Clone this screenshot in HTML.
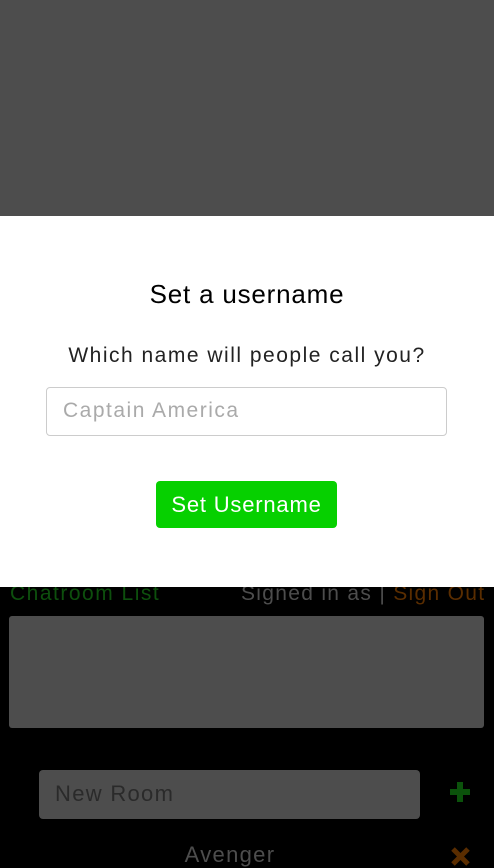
<!DOCTYPE html>
<html><head><meta charset="utf-8"><style>
*{margin:0;padding:0;box-sizing:border-box}
body{width:494px;height:864px;overflow:hidden;background:#000;font-family:"Liberation Sans",sans-serif;position:relative}
.top{position:absolute;left:0;top:0;width:494px;height:216px;background:#4d4d4d}
.modal{position:absolute;left:0;top:216px;width:494px;height:371px;background:#fff}
.abs{position:absolute;white-space:nowrap}
</style></head><body>
<div class="top"></div>
<div class="modal">
 <div class="abs" style="left:0;width:494px;text-align:center;top:63px;font-size:26px;letter-spacing:0.8px;color:#000">Set a username</div>
 <div class="abs" style="left:0;width:494px;text-align:center;top:128px;font-size:21px;letter-spacing:1.5px;color:#222">Which name will people call you?</div>
 <div class="abs" style="left:46px;top:171px;width:401px;height:49px;border:1px solid #ccc;border-radius:4px;font-size:21px;letter-spacing:1.5px;color:#aaa;padding:11px 0 0 16px">Captain America</div>
 <div class="abs" style="left:156px;top:265px;width:181px;height:47px;background:#06d000;border-radius:4px;color:#fff;font-size:22px;letter-spacing:0.8px;text-align:center;line-height:47px">Set Username</div>
</div>
<div class="abs" style="left:10px;top:580px;font-size:21px;letter-spacing:1.5px;color:#0d4f0d;line-height:28px;clip-path:inset(7px 0 0 0)">Chatroom List</div>
<div class="abs" style="left:241px;top:580px;font-size:21px;letter-spacing:1.3px;color:#4d4d4d;line-height:28px;clip-path:inset(7px 0 0 0)">Signed in as | <span style="color:#5a2d00">Sign Out</span></div>
<div class="abs" style="left:9px;top:616px;width:475px;height:112px;background:#4d4d4d;border-radius:3px"></div>
<div class="abs" style="left:39px;top:770px;width:381px;height:49px;background:#4d4d4d;border-radius:4px;font-size:22px;letter-spacing:1.3px;color:#2a2a2a;padding:11px 0 0 16px">New Room</div>
<div class="abs" style="left:450px;top:782px;width:20px;height:20px">
 <div style="position:absolute;left:7px;top:0;width:6px;height:20px;background:#0b520b"></div>
 <div style="position:absolute;left:0;top:7px;width:20px;height:6px;background:#0b520b"></div>
</div>
<div class="abs" style="left:0;width:494px;text-align:center;top:842px;font-size:22px;letter-spacing:1.3px;color:#4d4d4d;padding-right:34px">Avenger</div>
<svg class="abs" style="left:451px;top:847px" width="19" height="19" viewBox="0 0 19 19"><path d="M2 2L17 17M17 2L2 17" stroke="#5a2d00" stroke-width="5"/></svg>
</body></html>
